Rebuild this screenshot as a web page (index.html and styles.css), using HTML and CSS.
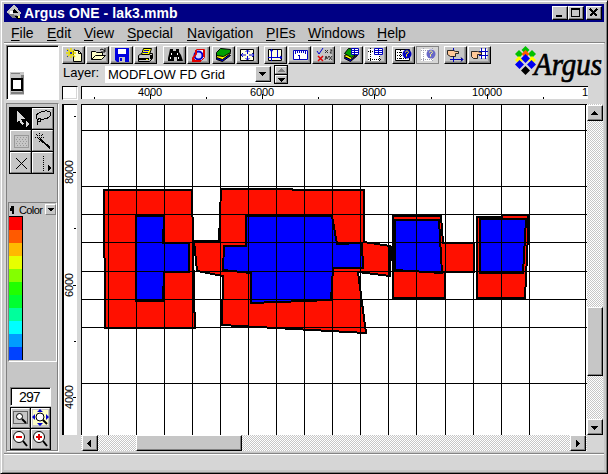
FILE: index.html
```html
<!DOCTYPE html>
<html lang="en">
<head>
<meta charset="utf-8">
<title>Argus ONE - lak3.mmb</title>
<link rel="stylesheet" href="styles.css">
</head>
<body>
<div class="window">
  <header class="titlebar">
    <svg class="appicon" width="16" height="16" viewBox="0 0 16 16"><path fill="#c6c6c6" d="M7 0h2l6 8-2 4H6L0 7z"/><path fill="#808080" d="M1 8l5 5h7l-3-3z"/><path fill="#fff" d="M4 6h3v3H4z"/><path fill="#000" d="M8 3l4 5H7zM9 11h5v3h-3z"/><path fill="#ffff80" d="M12 11h2v2h-2z"/></svg>
    <h1>Argus ONE - lak3.mmb</h1>
    <div class="controls">
      <button class="raised"><svg width="14" height="12"><path d="M3 8h6v2H3z"/></svg></button>
      <button class="raised"><svg width="14" height="12"><path fill-rule="evenodd" d="M2 1h9v9H2zM3 3h7v6H3z"/></svg></button>
      <button class="raised close"><svg width="14" height="12"><path fill="none" stroke="#000" stroke-width="1.7" d="M3 2l7 7M10 2l-7 7"/></svg></button>
    </div>
  </header>
  <nav class="menubar">
    <span class="m1"><u>F</u>ile</span><span class="m2"><u>E</u>dit</span><span class="m3"><u>V</u>iew</span><span class="m4"><u>S</u>pecial</span><span class="m5"><u>N</u>avigation</span><span class="m6"><u>P</u>IEs</span><span class="m7"><u>W</u>indows</span><span><u>H</u>elp</span>
  </nav>
  <main class="work">
    <div class="preview"><svg width="50" height="52"><path fill="#c6c6c6" d="M3 26h14v23H3z"/><path fill="#808080" d="M4 27h9v1H4zM14 29h3v19h-4v-2h2zM4 46h9v2H4z"/><path fill="#fff" stroke="#000" stroke-width="2" d="M5 33h10v11H5z"/></svg></div>
    <section class="top">
      <div class="bars">
        <div class="toolbar">
          <div class="group">
            <button class="raised"><svg width="21" height="16"><path fill="#ffffc6" stroke="#000" d="M10.500 3.500h5l3 3v8h-8z"/><path fill="none" stroke="#000" d="M15.500 3.500v3h3"/><path fill="none" stroke="#e8dc00" stroke-width="1.500" d="M8 1v10M3 6h10M4 2l8 8M12 2l-8 8"/><path fill="#2030c0" d="M7 5h2v2H7zM4 3h1v1H4zM4 9h1v1H4zM11 2h1v1h-1z"/></svg></button>
            <button class="raised"><svg width="21" height="16"><path fill="#ffffc6" stroke="#000" d="M4.500 12.500v-8h4l1 1h6v3h3l-4 4z"/><path fill="none" stroke="#000" d="M4.500 12.500l4-4h8M13 3l2-1 3 2M18 1v4h-4"/></svg></button>
            <button class="raised"><svg width="21" height="16"><path fill="#0000e0" d="M4 1h14v14H6l-2-2z"/><path fill="#fff" d="M7 2h8v5H7z"/><path fill="#c6c6c6" d="M8 10h6v5H8z"/><path fill="#0000e0" d="M9 11h2v3H9z"/></svg></button>
            <button class="raised"><svg width="21" height="16"><path fill="#c6c6c6" stroke="#000" d="M3.500 8.500l3-2h11v5l-3 3h-11z"/><path fill="#ffff00" stroke="#000" d="M8.500 1.500h8l-2 6h-8z"/><path stroke="#0000c0" d="M9 3.500h5M8 5.500h5"/><path fill="#000" d="M4 11h10v2H4zM15 8h2v4h-2z"/><path fill="#ff0" d="M11 12h2v1h-2z"/></svg></button>
          </div>
          <div class="group">
            <button class="raised"><svg width="21" height="16"><path d="M6 2h3v2h3V2h3v3l2 3 2 6h-6v-4h-3v4H4v-3l1-4z"/><path fill="#fff" d="M7 6h1v2H7zM6 10h1v2H6zM13 6h1v2h-1zM14 10h1v2h-1z"/></svg></button>
            <button class="raised"><svg width="21" height="16"><path fill="#fff" stroke="#e00000" d="M8.500 2.500h8v8l-3 3h-8l3-3z"/><circle cx="10.500" cy="8.500" r="4" fill="#d6d6ff" stroke="#0000d0" stroke-width="2"/><path fill="none" stroke="#e00000" stroke-width="2" d="M8 3v4l-3 4v3h8M16 3v7"/></svg></button>
          </div>
          <div class="group">
            <button class="raised"><svg width="21" height="16"><path stroke="#000" fill="#0000d0" d="M3.500 10.500l10-4 4 2-8 6-6-2z"/><path fill="#ff0" stroke="#000" d="M3.500 7.500l10-3 4 2-8 6-6-2z"/><path fill="#00a000" stroke="#000" d="M3.500 5.500l4-4 10 1v3l-7 4-7-1z"/></svg></button>
            <button class="raised"><svg width="21" height="16"><path fill="#ffffe0" stroke="#000" d="M3.500 2.500h13v11h-13z"/><path stroke="#0000d0" fill="none" d="M10.500 3v10M4 8h13M8.500 5l2-2 2 2M8.500 11l2 2 2-2M6 6L4 8l2 2M15 6l2 2-2 2"/><path fill="#ffffe0" d="M9 7h3v2H9z"/></svg></button>
          </div>
          <div class="group">
            <button class="raised"><svg width="21" height="16"><path fill="#ffffe0" stroke="#000" d="M3.500 2.500h13v11h-13z"/><path stroke="#0000d0" fill="none" d="M6.500 2v12M3 10.500h14M5 4l1.500-1L8 4M15 9l2 1.500L15 12M12.500 3v7"/></svg></button>
            <button class="raised"><svg width="21" height="16"><path fill="#fff" stroke="#0000c0" d="M4.500 3.500h14v9h-14z"/><path stroke="#0000c0" d="M6.500 4v3M8.500 4v2M10.500 4v2M12.500 4v2M14.500 4v2M16.500 4v3M9 8.500h2M10.500 8v4"/></svg></button>
            <button class="raised"><svg width="21" height="16"><path fill="none" stroke="#0000d0" d="M4 4l2 3 4-6"/><path fill="none" stroke="#e00000" stroke-width="1.500" d="M5 9l5 5M10 9l-5 5"/><path fill="none" stroke="#333" d="M12 3l3 3M12 6l3-3M17 3h2l-2 3h2M12 13l1-4 1 3 2-3M16 13l3-4M16 9l3 4"/></svg></button>
          </div>
          <div class="group">
            <button class="raised"><svg width="21" height="16"><path fill="#0000c0" stroke="#000" d="M3.500 10.500l9-3 4 1-7 6-6-3z"/><path fill="#ff0" stroke="#000" d="M3.500 8.500l9-3 4 2-7 5-6-3z"/><path fill="#00a000" stroke="#000" d="M3.500 6.500l4-5 9 1v4l-6 4z"/><path fill="#fff" stroke="#0000c0" d="M10.500 1.500h7v6h-7zM10 3.500h8M10 5.500h8M13.500 1v7"/></svg></button>
            <button class="raised"><svg width="21" height="16"><path fill="#fff" d="M3 2h12v12H3z"/><path fill="none" stroke="#000" stroke-dasharray="1 1" d="M5.500 1v14M3 4.500h14M3 12.500h14M14.500 1v14"/><path fill="#fff" stroke="#0000c0" d="M9.500 1.500h8v6h-8zM9 3.500h9M9 5.500h9M13.500 1v7"/></svg></button>
          </div>
          <div class="group">
            <button class="raised"><svg width="21" height="16"><path fill="#fff" stroke="#000" d="M2.500 2.500h14v11h-14z"/><path fill="none" stroke="#000" stroke-dasharray="1 1" d="M4 5.500h9M4 8.500h9M4 11.500h9M7.500 3v10"/><circle cx="14" cy="7" r="4.500" fill="#0000c0"/><path fill="none" stroke="#ff0" d="M12.500 5.500c0-2 3-2 3 0l-2 2v2"/></svg></button>
            <button class="raised pressed"><svg width="21" height="16"><path fill="#fff" d="M4 2h12v12H4z"/><path fill="none" stroke="#a0a0b0" stroke-dasharray="1 1" d="M6.500 1v14M4 3.500h12M4 12.500h12M15.500 1v14"/><circle cx="14" cy="7" r="4.500" fill="#6868c8"/><path fill="none" stroke="#ffff80" d="M12.500 5.500c0-2 3-2 3 0l-2 2v2"/></svg></button>
          </div>
          <div class="group">
            <button class="raised"><svg width="21" height="16"><path stroke="#0000c0" d="M8.500 1v14M5 12.500h13M16 10.500l2 2-2 2"/><path fill="#ffc898" stroke="#000" stroke-width=".8" d="M2.500 3.500h6l2 1h3v2h-3v3h-5l-3-2z"/></svg></button>
            <button class="raised"><svg width="21" height="16"><path fill="#fff" d="M11 2h7v9h-7z"/><path stroke="#0000c0" d="M12.500 1v11M16.500 1v11M10 4.500h9M10 8.500h9"/><path fill="#ffc898" stroke="#000" stroke-width=".8" d="M2.500 4.500h6l4 1v2h-4v4h-4l-2-2z"/></svg></button>
          </div>
        </div>
        <div class="layer"><label>Layer:</label><div class="combo"><span>MODFLOW FD Grid</span><button class="raised"><svg width="14" height="14"><path d="M3 5h7L6.500 9z"/></svg></button></div>
          <div class="spin"><button class="raised"><svg width="12" height="7"><path fill="#808080" d="M2 5h7L5.500 1z"/></svg></button><button class="raised"><svg width="12" height="7"><path d="M2 2h7L5.500 6z"/></svg></button></div>
        </div>
      </div>
      <svg class="logo" width="92" height="40" viewBox="513 44 92 40"><path fill="#00c000" d="M525.500 46l4 4-4 4-4-4zM519 50l4 4-4 4-4-4zM532 50l4 4-4 4-4-4z"/><path fill="#ff0" d="M519 56l4 4-4 4-4-4zM532 56l4 4-4 4-4-4z"/><path fill="#ff5a00" d="M525.500 50l4 4-4 4-4-4z"/><path fill="#0000f0" d="M525.500 54l4.500 4.500-4.500 4.500-4.500-4.500zM519.500 60l4.500 4.500-4.500 4.500-4.500-4.500zM531.500 60l4.500 4.500-4.500 4.500-4.500-4.500z"/><path d="M525.500 66l4.500 4.500-4.500 4.500-4.500-4.500z"/><text x="534" y="75" textLength="68" lengthAdjust="spacingAndGlyphs">Argus</text></svg>
      <div class="rulers"><div class="corner"></div>
        <div class="hruler"><svg width="506" height="12" viewBox="82 87 506 12"><path stroke="#000" d="M94.500 97v2M150.500 94v5M206.500 97v2M262.500 94v5M318.500 97v2M374.500 94v5M431.500 97v2M487.500 94v5M543.500 97v2"/><g><text x="138" y="96" textLength="24">4000</text><text x="250" y="96" textLength="24">6000</text><text x="362" y="96" textLength="24">8000</text><text x="472" y="96" textLength="30">10000</text><text x="582" y="96">1</text></g></svg></div>
      </div>
    </section>
    <aside class="side">
      <div class="tools">
        <button class="raised dark"><svg width="21" height="21"><path fill="#d6d6d6" d="M6 2l8 8h-4l3 5-2 1-3-5-2 3zM15 12l3 3-3 3z"/></svg></button>
        <button class="raised"><svg width="21" height="21"><path fill="none" stroke="#000" d="M6 11C1 9 3 5 8 3s10-1 10 2-6 6-10 5M6 9c-2 1-3 4 0 4s2-4 0-4M5 13l-1 3"/></svg></button>
        <button class="raised"><svg width="21" height="21"><path fill="none" stroke="#999" d="M3.500 4.500h14v12h-14z"/><path stroke="#999" stroke-dasharray="1 2" d="M6 6.500h10M5 8.500h11M6 10.500h10M5 12.500h11M6 14.500h10"/></svg></button>
        <button class="raised"><svg width="21" height="21"><path stroke="#000" stroke-width="2" d="M7 8l10 9"/><path stroke="#000" fill="none" stroke-dasharray="1 1" d="M6.500 2v9M2 6.500h10M3 3l7 7M10 3l-7 7"/></svg></button>
        <button class="raised"><svg width="21" height="21"><path stroke="#000" d="M5 5l11 11M16 5L5 16"/></svg></button>
        <button class="raised"><svg width="21" height="21"><path stroke="#000" stroke-dasharray="1 1" d="M10.500 3v15"/><path d="M15 12l3 3-3 3z"/></svg></button>
      </div>
      <div class="legend">
        <div class="legend-head"><svg width="10" height="12"><path d="M2 2h3v8H3V7H1V4h1z"/></svg><span>Color</span><svg class="drop" width="11" height="11"><path d="M1 3h7L4.500 6.500z"/></svg></div>
        <div class="swatches"><i class="c1"></i><i class="c2"></i><i class="c3"></i><i class="c4"></i><i class="c5"></i><i class="c6"></i><i class="c7"></i><i class="c8"></i><i class="c9"></i><i class="c10"></i><i class="c11"></i></div>
      </div>
      <div class="value">297</div>
      <div class="zooms">
        <button class="raised"><svg width="19" height="20"><path fill="none" stroke="#000" stroke-dasharray="1 1" d="M2.500 3.500h14v12h-14z"/><circle cx="8.500" cy="8.500" r="3" fill="#fff" stroke="#000"/><path stroke="#000" stroke-width="2" d="M11 11l4 4"/></svg></button>
        <button class="raised"><svg width="19" height="20"><path fill="#ffffc6" d="M2 2h15v15H2z"/><path fill="#0000d0" d="M9 1l3 3H6zM9 18l3-3H6zM1 9l3-3v6zM18 9l-3-3v6z"/><circle cx="9" cy="9" r="4" fill="#fff" stroke="#000"/><path stroke="#000" stroke-width="2" d="M12 12l4 4"/></svg></button>
        <button class="raised"><svg width="19" height="20"><circle cx="8" cy="8" r="5.500" fill="#fff" stroke="#000"/><path stroke="#000" stroke-width="2" d="M12 12l4 5"/><path fill="#e00000" d="M5 7h6v2H5z"/></svg></button>
        <button class="raised"><svg width="19" height="20"><circle cx="8" cy="8" r="5.500" fill="#fff" stroke="#000"/><path stroke="#000" stroke-width="2" d="M12 12l4 5"/><path fill="#e00000" d="M5 7h6v2H5zM7 5h2v6H7z"/></svg></button>
      </div>
    </aside>
    <div class="vruler"><svg width="13" height="330" viewBox="64 105 13 330"><path stroke="#000" d="M74 116.500h2M73 172.500h3M74 228.500h2M73 285.500h3M74 341.500h2M73 397.500h3"/><g><text transform="translate(73 184) rotate(-90)" textLength="24">8000</text><text transform="translate(73 297) rotate(-90)" textLength="24">6000</text><text transform="translate(73 409) rotate(-90)" textLength="24">4000</text></g></svg></div>
    <section class="view">
      <svg class="canvas" width="506" height="331" viewBox="81 104 506 331">
        <g stroke="#000" stroke-width="2" fill="#ff1000">
          <path d="M104 190H192L193 242 194 296 195 328H105V260L104 256z"/>
          <path d="M194 241H219L221 189H292L293 190H364V242L390 246V276L358 272 366 333 222 325 223 276 197 271z"/>
          <path d="M393 216H441L443 243H474V272H445V298H393z"/>
          <path d="M477 217L502 217 503 215H528V235L525 298H477z"/>
          <path stroke-width="3" d="M391.500 246v15"/>
        </g>
        <g stroke="#000" stroke-width="2" fill="#00f">
          <path d="M136 216H164L163 243H189V272H164L163 301H136z"/>
          <path d="M224 246H246V216H332L337 244 362 243 363 268H333L331 300 251 303V273L223 270z"/>
          <path d="M395 220H439L442 273 395 270z"/>
          <path d="M480 219H526L523 273H480z"/>
        </g>
        <path fill="none" stroke="#000" d="M443 272.500h31"/>
        <path fill="none" stroke="#000" d="M108.500 105v330M136.500 105v330M164.500 105v330M192.500 105v330M220.500 105v330M248.500 105v330M276.500 105v330M304.500 105v330M332.500 105v330M360.500 105v330M388.500 105v330M416.500 105v330M445.500 105v330M473.500 105v330M501.500 105v330M529.500 105v330M585.500 105v330M82 130.500h505M82 186.500h505M82 214.500h505M82 242.500h505M82 271.500h505M82 299.500h505M82 327.500h505M82 383.500h505"/>
        <path fill="none" stroke="#000" d="M81 104.500h506M81.500 104v331"/>
      </svg>
      <div class="vscroll"><button class="raised"><svg width="13" height="13"><path d="M3 8h7L6.500 4z"/></svg></button><div class="thumb raised"></div><button class="raised"><svg width="13" height="13"><path d="M3 5h7L6.500 9z"/></svg></button></div>
      <div class="hscroll"><button class="raised"><svg width="13" height="13"><path d="M8 3v7L4 6.500z"/></svg></button><div class="thumb raised"></div><button class="raised"><svg width="13" height="13"><path d="M5 3v7l4-3.500z"/></svg></button></div>
    </section>
  </main>
  <footer class="status"></footer>
</div>
</body>
</html>
```

FILE: styles.css
```css
* { box-sizing: border-box; }
body { margin: 0; background: #c6c6c6; font: 13px/16px "Liberation Sans", Arial, sans-serif; color: #000; overflow: hidden; }
svg { display: block; shape-rendering: crispEdges; flex: none; }
button { padding: 0; margin: 0; font: inherit; flex: none; overflow: hidden; display: block; }
.raised { background: #c6c6c6; border: 1px solid; border-color: #fff #000 #000 #fff; box-shadow: inset -1px -1px #808080; }
.window { width: 608px; height: 474px; display: flex; flex-direction: column; padding: 3px 2px 1px 3px; border: 1px solid; border-color: #d6d6d6 #000 #000 #d6d6d6; box-shadow: inset 1px 1px #fff, inset -1px -1px #808080; }
.titlebar { height: 18px; background: #000084; display: flex; align-items: center; padding-left: 2px; margin-right: 1px; flex: none; }
h1 { flex: 1; margin: 0 0 0 2px; color: #fff; font: bold 14px/18px "Liberation Sans", Arial, sans-serif; letter-spacing: .1px; }
.controls { display: flex; padding-right: 2px; }
.controls button { width: 16px; height: 14px; }
.controls .close { margin-left: 2px; }
.menubar { height: 21px; flex: none; display: flex; padding: 3px 0 0 7px; font-size: 14px; line-height: 16px; border-bottom: 1px solid #848484; }
.menubar span { white-space: nowrap; }
.menubar u { text-underline-offset: 2px; text-decoration-thickness: 1px; }
.m1 { width: 36px; }
.m2 { width: 37px; }
.m3 { width: 43px; }
.m4 { width: 60px; }
.m5 { width: 79px; }
.m6 { width: 42px; }
.m7 { width: 69px; }
.work { flex: none; height: 409px; background: #d6d6d6; border-top: 1px solid #fff; display: grid; grid-template: 60px 348px / 58px 19px 525px; margin-right: 1px; }
.preview { width: 53px; height: 55px; margin: 1px 0 0 2px; background: #fff; border: 1px solid; border-color: #808080 #fff #fff #808080; box-shadow: inset 1px 1px #000; }
.top { grid-column: 2 / 4; display: grid; grid-template: 41px 19px / 451px 93px; }
.toolbar { display: flex; gap: 5px; margin-top: 2px; }
.group { display: flex; gap: 1px; }
.toolbar .group:nth-child(2) { margin-right: -4px; margin-left: 1px; }
.toolbar .group:nth-child(3) { margin-left: 1px; }
.toolbar .group button { width: 23px; height: 18px; box-shadow: inset -1px -1px #808080, inset -2px -2px #a0a0a0; }
.toolbar .group .pressed { border: 1px solid #848484; box-shadow: none; background: #d6d6d6; }
.toolbar svg { shape-rendering: geometricPrecision; }
.layer { display: flex; height: 21px; align-items: center; }
.layer label { width: 43px; padding-left: 1px; font-size: 13px; line-height: 16px; margin-top: -3px; }
.combo { display: flex; width: 166px; height: 17px; background: #fff; }
.combo span { flex: 1; padding-left: 3px; line-height: 17px; white-space: nowrap; }
.combo button { width: 16px; height: 16px; }
.spin { width: 14px; height: 19px; margin-left: 3px; background: #000; padding: 1px; }
.spin button { width: 12px; height: 8px; margin-bottom: 1px; border-color: #fff #808080 #808080 #fff; box-shadow: none; }
.logo { overflow: visible; shape-rendering: geometricPrecision; }
.logo text { font: italic 32px "Liberation Serif", serif; stroke: #000; stroke-width: .7px; }
.rulers { grid-column: 1 / 3; display: flex; gap: 3px; padding-top: 1px; }
.corner { width: 16px; height: 14px; background: #fff; border: 1px solid; border-color: #000 #fff #fff #000; box-shadow: inset -1px -1px #d6d6d6; }
.hruler { background: #fff; border-top: 1px solid #000; border-left: 1px solid #000; width: 507px; height: 13px; }
.hruler text, .vruler text { font: 11px "Liberation Sans", Arial, sans-serif; }
.side { width: 53px; height: 349px; margin: -1px 0 0 2px; background: #c6c6c6; border: 1px solid; border-color: #808080 #fff #fff #808080; box-shadow: inset -1px -1px #808080; padding: 3px 0 0 2px; }
.tools { width: 45px; height: 67px; display: grid; grid-template: repeat(3, 21px) / repeat(2, 21px); gap: 1px; background: #000; padding: 1px; }
.tools button { border-color: #fff #808080 #808080 #fff; box-shadow: none; }
.tools .dark { background: #000; border-color: #000; }
.legend { width: 49px; height: 160px; margin: 28px 0 0 -1px; border: 1px solid; border-color: #808080 #fff #fff #808080; }
.legend-head { height: 13px; display: flex; align-items: center; font-size: 11px; line-height: 12px; letter-spacing: -.6px; }
.legend-head span { width: 26px; }
.drop { border: 1px solid; border-color: #fff #808080 #808080 #fff; }
.swatches { width: 14px; height: 144px; border: solid #000; border-width: 1px 1px 0 0; }
.swatches i { display: block; height: 13px; }
.c1 { background: #f00; }
.c2 { background: #ff5a00; }
.c3 { background: #ffb900; }
.c4 { background: #e7ff00; }
.c5 { background: #84ff00; }
.c6 { background: #21ff00; }
.c7 { background: #00ff31; }
.c8 { background: #00ff9c; }
.c9 { background: #0ff; }
.c10 { background: #009cff; }
.c11 { background: #0042ff; }
.value { width: 41px; height: 19px; margin: 25px 0 0 1px; background: #fff; border: 1px solid; border-color: #808080 #fff #fff #808080; box-shadow: inset 1px 1px #000; padding-left: 8px; font-size: 14px; line-height: 18px; letter-spacing: -.9px; }
.zooms { width: 41px; height: 43px; margin: 1px 0 0 1px; display: grid; grid-template: 20px 20px / 19px 19px; gap: 1px; padding: 1px; background: #000; }
.zooms button { border-color: #fff #808080 #808080 #fff; box-shadow: none; }
.zooms svg { shape-rendering: geometricPrecision; margin: -1px; }
.vruler { background: #fff; border-left: 2px solid #000; border-top: 1px solid #000; width: 15px; height: 331px; }
.view { display: grid; grid-template: 331px 17px / 506px 16px; height: 348px; }
.canvas { background: #fff; }
.hscroll, .vscroll { display: flex; background: repeating-conic-gradient(#c6c6c6 0 25%, #fff 0 50%) 0 0 / 2px 2px; }
.vscroll { flex-direction: column; padding-top: 1px; }
.hscroll { padding-left: 1px; height: 16px; }
.hscroll button, .vscroll button { width: 16px; height: 16px; }
.vscroll .thumb { height: 69px; margin: 186px 0 43px; }
.hscroll .thumb { width: 106px; margin: 0 328px 0 38px; }
.status { flex: 1; background: #d6d6d6; margin: 1px 1px 2px 0; border-top: 1px solid #848484; box-shadow: inset 0 1px #fff; }
```
